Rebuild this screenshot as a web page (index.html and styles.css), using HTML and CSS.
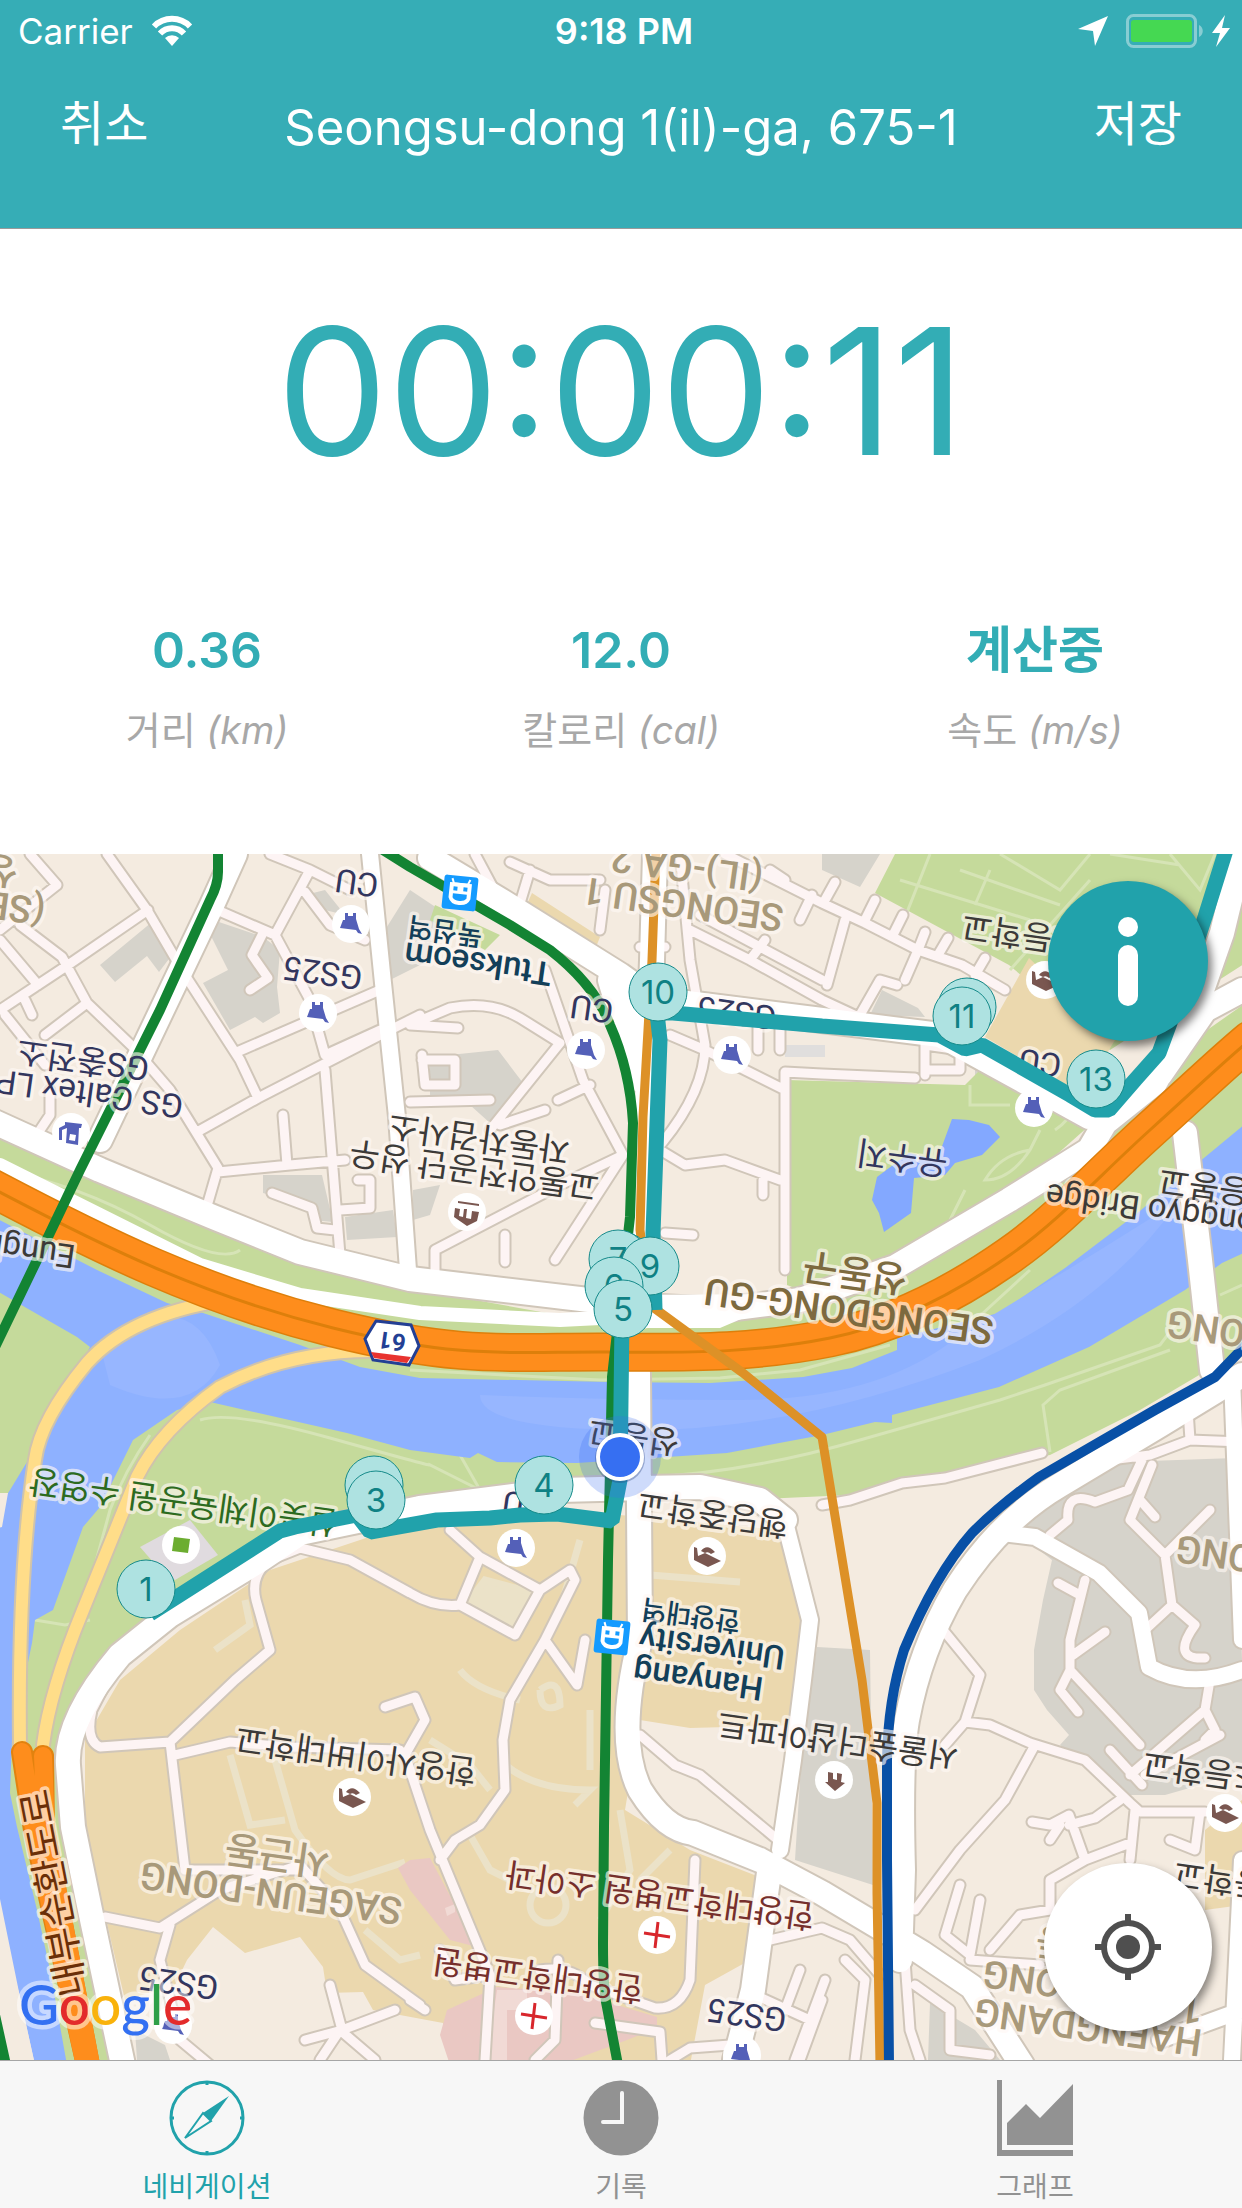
FILE: index.html
```html
<!DOCTYPE html>
<html lang="ko">
<head>
<meta charset="utf-8">
<meta name="viewport" content="width=device-width, initial-scale=1">
<title>네비게이션</title>
<link rel="stylesheet" href="styles.css">
</head>
<body>
<header class="header">
  <div class="status">
    <div class="status-side">
      <span>Carrier</span>
      <svg class="wifi" viewBox="0 0 44 32" aria-hidden="true"><path d="M22 31l-7-8a10 10 0 0 1 14 0z"/><path d="M4 11.500a25 25 0 0 1 36 0M10 18.500a16.500 16.500 0 0 1 24 0" fill="none" stroke="currentColor" stroke-width="6"/></svg>
    </div>
    <strong class="status-time">9:18 PM</strong>
    <div class="status-side status-right">
      <svg class="arrow" viewBox="0 0 30 30" aria-hidden="true"><path d="M30 0L17 30L15 15L0 13z"/></svg>
      <svg class="battery" viewBox="0 0 78 34" aria-hidden="true"><rect x="1.500" y="1.500" width="68" height="31" rx="6" fill="none" stroke="#88cdd3" stroke-width="3"/><path d="M73 11c5 2 5 10 0 12z" fill="#88cdd3"/><rect x="5" y="6" width="61" height="22" rx="3" fill="#45d852"/></svg>
      <svg class="bolt" viewBox="0 0 18 32" aria-hidden="true"><path d="M13 0L0 18h8L4 32L18 13h-8z"/></svg>
    </div>
  </div>
  <div class="navbar">
    <button class="nav-button" type="button">취소</button>
    <h1 class="nav-title">Seongsu-dong 1(il)-ga, 675-1</h1>
    <button class="nav-button" type="button">저장</button>
  </div>
</header>
<section class="summary">
  <div class="timer">00:00:11</div>
  <dl class="stats">
    <div class="stat"><dd>0.36</dd><dt>거리 <em>(km)</em></dt></div>
    <div class="stat"><dd>12.0</dd><dt>칼로리 <em>(cal)</em></dt></div>
    <div class="stat"><dd>계산중</dd><dt>속도 <em>(m/s)</em></dt></div>
  </dl>
</section>
<main class="map">
<svg class="map-canvas" viewBox="0 854 1242 1206" preserveAspectRatio="xMidYMid slice" role="img" aria-label="지도">
  <defs>
    <path id="minor" d="M0 1010L68 965L148 910M20 925L62 957L87 1003L133 1047L170 1090L218 1168L207 1206M107 854L147 910L185 975L240 1060L258 1098M30 854L57 885L0 930M197 1132L258 1098L390 1030L420 1015M237 1052L380 990M218 1172L290 1165L345 1160M283 1115L287 1165M325 1070L340 1255M217 910L275 935L310 870L270 854M275 935L310 1000M262 935L252 955L268 978L250 990M310 870L350 890M305 892L330 925L365 940M272 1193L312 1208L317 1228L335 1230M340 1210L370 1208L370 1180L358 1180M0 940L38 985M5 1015L45 1065M87 1003L45 1035M25 1000L32 1015M50 1090V1115L40 1130M318 1030L325 1055L380 1030M410 1025L450 1008Q490 1000 520 1018L560 1043M545 970L583 1080L623 1155M560 1043L490 1130M410 1025L458 1028M558 1100L590 1085M500 1125L545 1110M422 1060H455V1085H425L422 1055M410 1102L490 1100M623 1155L560 1185L435 1250V1270M623 1155L555 1260M505 1235V1262M660 1150L685 1165L725 1160L780 1180M763 1180V1195M662 1143Q705 1090 705 1045L690 960L680 854M670 1035L705 1050L785 1090V1270M785 1090V1072L822 1074L915 1078M758 1025V1050M780 1025V1050M690 930L750 960L822 1000L865 1020M750 960L765 940M700 915L822 980M725 854L822 903L865 923L918 950L962 965L1005 990M825 900L835 882M865 920L875 900M893 935L903 915M918 950L925 932M938 955L948 938M975 975L985 958M665 947H640M510 862L550 880L600 880M515 920L530 870M475 854L505 910M600 930L605 890M665 1233L693 1235M827 985L845 920M860 1015L880 980L897 985M905 980L918 950M770 870L785 880M800 920L812 895M925 1075V1045L960 1050V1070H930M300 1548L270 1560Q250 1575 256 1600L270 1650L235 1680L170 1742M300 1548L350 1560L410 1593Q435 1608 460 1605L480 1557L450 1530M480 1557L540 1590L515 1635L460 1605M540 1590L570 1570L575 1580L545 1640L577 1685L585 1640M545 1640L510 1700L503 1740L505 1790L480 1825L455 1840L440 1860M170 1742L100 1747Q85 1740 92 1710L110 1675M170 1742L185 1870L300 1870M175 1755L230 1742L290 1747L400 1750M105 1917L160 1928L220 1890L300 1865L340 1910L365 1965L420 2005M170 1925L160 1960L180 2040L210 2065M385 1707L415 1697L425 1720L405 1755L430 1830L490 1975L485 2060M330 1985L342 2030L305 2040M342 2030L395 2010M340 2030L375 2060M340 2030L320 2060M490 1975L455 1980L440 1950M410 2000L425 2010M558 1960L555 2040L535 2060M595 2023L660 2032L662 2060M695 1860L690 1980Q680 2010 655 2008L590 1985Q570 1965 540 1970M640 1735L675 1765L700 1775L778 1840M670 2060L690 2048L730 2045M755 1995L810 2020L795 2060M785 2010L800 1970M812 2015L825 1980M770 1940L822 1928L850 1940L880 1975M845 1960L865 1980L855 2060M800 2060L822 2000M935 1620L980 1675L965 1722L945 1745M965 1722L990 1725L1030 1743L1085 1760L1130 1803L1140 1812H1205M1035 1745L1005 1800L960 1850L915 1910M1032 1822L1050 1825L1069 1815L1085 1860L1130 1843M1050 1840L1060 1825M1069 1825L1095 1818L1120 1800M1085 1860L1050 1880V1910L1020 1915L990 1950M1135 1810L1130 1860M960 1885L945 1935L970 1955M980 1900L970 1955M915 1985L950 2010V2050L990 2055M905 1960L910 2030L920 2060M970 1960L1040 1965M1200 1812L1195 1850L1170 1840M1142 1460L1128 1490L1095 1502Q1065 1490 1068 1520L1050 1535M1152 1465L1130 1520L1165 1555L1172 1605L1195 1625Q1170 1660 1205 1658M1172 1605L1145 1630M1210 1510L1165 1555M1140 1500L1155 1517M1085 1580L1070 1640V1670L1140 1745M1058 1583L1080 1595M1073 1655L1105 1632M1070 1670L1060 1690L1078 1712M1110 1750L1142 1785M1130 1775L1205 1710L1210 1680M1205 1710L1215 1730L1205 1740M822 1505L850 1500L902 1483L945 1478L1042 1453M1110 1460L1150 1455L1190 1440L1242 1442M1188 1410L1190 1440M1145 1775L1220 1735"/>
    <path id="medium" d="M370 854L383 983L397 1117L408 1270M787 1530L810 1620L803 1680L793 1760L780 1850M1002 1533L1035 1537L1099 1573L1139 1613L1149 1667Q1190 1690 1242 1670M1232 1377L1242 1640M1242 1860L1232 2060M1160 2040L1242 2010"/>
    <path id="major" d="M235 854L212 905L100 1140M-10 1120L100 1170L213 1217L300 1252L410 1279L640 1306L720 1310L800 1300L895 1267L1009 1200L1089 1150L1105 1123L1155 1083L1195 1010L1222 933L1242 850M1160 1075L1205 1010L1242 990M1185 1133L1200 1260L1212 1370M430 858L500 900L620 975L655 1000M655 854L652 960L640 1300M610 980L640 1080M687 1003L822 1020L940 1035L1089 1117M1242 1375L1160 1425L1060 1485Q1000 1520 955 1590Q920 1650 907 1720Q900 1760 903 1870L900 1960M638 1373L640 1640Q615 1740 640 1790Q665 1830 693 1833L760 1860L822 1893L879 1927L922 1953L972 1987L1022 2065M420 1508L300 1533L260 1560L170 1615L120 1655Q65 1720 68 1765L73 1827L90 1910L123 2065M420 1508L560 1490L640 1488L700 1487L760 1500L785 1520M770 1865L753 1990L735 2060"/>
    <g id="shop"><circle r="19" fill="#fff"/><path d="M-6-11h3v3h5v-3h3v6L8 5l3 5-4-1-2-3-16-2L-8-4h2z" fill="#5460b8"/></g>
    <g id="school"><circle r="19" fill="#fff"/><path d="M-13-9l3 1 1 8 7-3 16 8L1 11-13 4zM-6-5q6-8 14 1l-4 2q-3-3-6-1z" fill="#7a5750"/></g>
    <g id="hospital"><circle r="19" fill="#fff"/><path d="M1-13L-2 13M-13-2L13 2" stroke="#d8262c" stroke-width="3"/></g>
    <g id="metro" transform="rotate(6)"><rect x="-17" y="-17" width="34" height="34" rx="3" fill="#149bff"/><path d="M-9-14l2 5h14l2-5" fill="none" stroke="#fff" stroke-width="2"/><path d="M-10-9h20v14q-2 6-10 6t-10-6z" fill="#fff" stroke="#fff" stroke-width="2"/><path d="M-7 1H7v4q-2 3-7 3t-7-3zM-7-6h4v4h-4zM3-6h4v4H3z" fill="#149bff"/></g>
    <path id="expressway" d="M-10 1187C100 1245 200 1295 333 1328S520 1351 610 1352S760 1352 830 1338S960 1290 1010 1255S1100 1175 1150 1130S1220 1065 1250 1040"/>
    <path id="ramps" d="M225 1300Q130 1315 87 1363Q40 1420 35 1460Q18 1570 20 1745M400 1352Q300 1345 220 1387Q160 1430 137 1477L83 1610Q50 1690 43 1745"/>
  </defs>
  <rect x="-400" y="454" width="2100" height="2000" fill="#f4ebe0"/>
  <g fill="#d6d3cb">
    <path d="M100 965L152 922L172 955L159 972L147 956L115 982zM213 920L263 937L280 950L277 987L280 1013L263 1023L255 1017L230 1030L203 983L228 970L208 930zM263 1175H322L333 1222L312 1220L308 1205L263 1193zM345 1217L393 1210L397 1237L347 1240zM385 930L410 890L440 910L430 960L390 980zM430 1057L498 1050L523 1083L490 1123L470 1105L430 1097zM822 854H880L860 887L822 870zM882 990L918 1008L925 1017L870 1015zM313 893L325 890L345 915L325 910zM413 1190L440 1185L430 1215L413 1220zM975 1055L1000 1070L975 1078z"/>
    <path d="M1009 1527L1080 1480L1120 1462L1235 1458L1242 1660V1770L1200 1785L1165 1795L1120 1795L1080 1760L1060 1745L1069 1735L1047 1710L1034 1690V1650L1043 1600L1052 1560zM817 1647L870 1650L873 1885L795 1860L800 1780L808 1700zM930 2003L975 2030L1000 2060H928zM135 2030L165 2045L170 2060H137z"/>
  </g>
  <path d="M785 1045h40v12h-40z" fill="#e0dedd"/>
  <g fill="#c5da9b">
    <path d="M-10 1120L200 1215L420 1290L640 1330L900 1262L1090 1145L1200 1035L1250 1000V1345L1140 1410L1050 1455L850 1495L740 1500L540 1485L410 1510L300 1530L170 1610L110 1650L75 1700L60 1760L65 1850L125 2065H50L-10 1800z"/>
    <path d="M787 1080L965 1085L990 1060L1075 1105L1090 1125L1000 1205L890 1265L800 1290L787 1285zM895 854H1250V960L1110 1050L1009 965L875 893zM435 905L500 935L485 950L430 920zM628 1010L640 1015L636 1030z"/>
  </g>
  <g fill="none" stroke="#d6e4b6" stroke-width="3"><path d="M900 880L1030 920M930 854L900 930M960 870L1060 905M1000 854L1060 890L1090 854M1090 880L1010 970M990 870L975 905M1170 854L1200 890L1215 854M1110 854L1180 865M970 1085V1105H1010M1040 1130L1030 1150Q1000 1155 985 1180Q1010 1180 1030 1150M1055 1130Q1070 1120 1075 1105M965 1190L950 1220M0 1170Q80 1185 150 1225T240 1250M200 1420Q230 1410 330 1438T430 1465L480 1490L460 1455M650 1477Q750 1472 860 1440L1000 1400L1045 1385L1160 1345L1175 1325M1170 1350L1060 1390L1043 1405L1050 1452M90 1620L65 1625L35 1620M150 1435Q125 1470 110 1510L80 1620M410 1370L600 1380L720 1378L800 1370L890 1345M970 1325L1030 1270M1220 1295L1242 1285"/></g>
  <path d="M952 1119L969 1120L989 1125L1000 1137L982 1155L955 1163L945 1175L914 1178L911 1213L884 1232L879 1213L872 1200L877 1177L909 1153L937 1160z" fill="#83a8ff"/>
  <path d="M-10 1215L97 1270L167 1303L200 1312L300 1345L360 1367L420 1378L610 1382L710 1383L803 1377L852 1368L897 1350V1338L999 1313L1065 1268L1135 1215L1250 1120V1250L1222 1263L1185 1290L1089 1347L999 1387L892 1415V1423L875 1422L822 1435L727 1453L577 1463L497 1462L478 1453L470 1458L410 1450L347 1433L210 1402L177 1410L133 1440L100 1507L83 1527L53 1610L35 1620L32 1643L12 1740L10 1793L17 1827L37 1910L50 1970L67 2065H35L20 1997L-10 1850V1520L10 1490L30 1457L90 1347L77 1337L-10 1287z" fill="#8eb1ff"/>
  <path d="M100 1345Q190 1280 220 1365Q190 1420 110 1385zM480 1395Q600 1400 740 1400T960 1335L1100 1250L1180 1200Q1110 1300 980 1360Q800 1430 640 1430T480 1395z" fill="#97b6ff"/>
  <path d="M-10 1493L8 1493L2 1527L-10 1530zM-10 1880L20 1997L35 2065H-10z" fill="#f4ebe0"/>
  <path d="M85 1740L120 1680L180 1630L270 1570L420 1520L620 1515L780 1530L812 1620L798 1725L690 1728L640 1720L625 1810L690 1850L780 1885L750 1960L705 1985L690 2065H450L443 2023L373 2010L363 1992L327 1993L323 1967L300 1937L245 1953L213 1927L187 1960L175 1985L125 2000L85 1830zM1029 958L1115 1040L1082 1095L985 1037zM532 893L600 937L592 957L523 913zM1205 1830L1242 1800V1905L1205 1910z" fill="#ebd8ae"/>
  <g fill="none" stroke="#ebe2c8" stroke-width="7"><path d="M230 1755L250 1825L285 1820M275 1760L295 1830Q330 1880 350 1880L405 1862M460 1670Q475 1690 520 1700M540 1690q20-15 20 15q-20 10-20-15M590 1710V1770M500 1760Q530 1790 590 1790L575 1805M620 1810L630 1870L600 1920M670 1850L640 1880M470 1835L490 1870L530 1890M650 1575L740 1582M560 1610L580 1540M215 1650L250 1625L245 1600M365 1930L400 1960L420 1955M430 1740L470 1765L490 1790"/><path d="M466 1605L485 1580L530 1592L515 1625z" fill="#ebe2c8"/><circle cx="548" cy="1905" r="18"/></g>
  <path d="M398 1868L410 1860L430 1858L477 1947L450 1940L410 1890zM447 2010L497 1987L577 1993L657 2017V2028L627 2040L560 2065H450L440 2035z" fill="#eac8c3"/>
  <path d="M497 1990h30v20h-20v50h-20zM445 1908l10-4v8l-8 4z" fill="#f1dad5"/>
  <path d="M140 1547L190 1520L218 1555L175 1580L160 1570z" fill="#e0dbdf"/>

  <use href="#minor" class="road minor-casing"/>
  <use href="#medium" class="road medium-casing"/>
  <use href="#major" class="road major-casing"/>
  <use href="#minor" class="road minor-fill"/>
  <use href="#medium" class="road medium-fill"/>
  <use href="#major" class="road major-fill"/>
  <path d="M0 1165L100 1215L200 1265L300 1295L420 1313L560 1320L640 1316" class="road" stroke="#fff" stroke-width="14"/>
  <path d="M610 990L655 1000L640 1090zM590 1295L800 1294L720 1328L600 1328z" fill="#fff"/>
  <g class="road">
    <use href="#ramps" stroke="#cfc3ac" stroke-width="16"/>
    <use href="#ramps" stroke="#ffdd89" stroke-width="12"/>
    <path d="M22 1752L34 1830L88 2070M43 1756L44 1830L90 2070" stroke="#e2820f" stroke-width="22"/>
    <path d="M22 1752L34 1830L86 2070M43 1756L46 1830L92 2070" stroke="#fe8d1c" stroke-width="18"/>
    <use href="#expressway" stroke="#dd7f0b" stroke-width="39"/>
    <use href="#expressway" stroke="#fe8d1c" stroke-width="36"/>
    <use href="#expressway" stroke="#dd7f0b" stroke-width="3"/>
    <path d="M656 850L652 960L643 1117L640 1230L650 1305L743 1373L822 1437L862 1680L877 1803V1893L880 2065" stroke="#dd9127" stroke-width="9"/>
    <path d="M1245 1346L1215 1377L1155 1410L1089 1448L1039 1477Q1000 1505 972 1533Q935 1575 904 1650Q888 1700 887 1760V1860L889 2065" stroke="#0850a6" stroke-width="10"/>
    <path d="M218 850V872Q218 885 210 900L160 1010L80 1170L37 1260L-5 1347M383 850L410 867L510 925L550 950Q595 985 610 1025Q630 1070 633 1123L630 1217L612 1377L608 1560L604 1827L603 1943Q603 1990 607 2007L618 2065M-5 2015L6 2065" stroke="#138433" stroke-width="10"/>
  </g>
  <use href="#shop" x="351" y="924"/><use href="#shop" x="318" y="1013"/><use href="#shop" x="586" y="1050"/><use href="#shop" x="732" y="1055"/><use href="#shop" x="1034" y="1108"/><use href="#shop" x="516" y="1548"/><use href="#shop" x="742" y="2055"/><use href="#shop" x="173" y="2025"/>
  <use href="#school" x="1045" y="980"/><use href="#school" x="707" y="1556"/><use href="#school" x="352" y="1797"/><use href="#school" x="1225" y="1813"/>
  <use href="#hospital" x="657" y="1935"/><use href="#hospital" x="534" y="2016"/>
  <use href="#metro" x="460" y="893"/><use href="#metro" x="612" y="1637"/>
  <g transform="translate(71 1132)"><circle r="19" fill="#fff"/><path d="M-6-10l17 2-1 4h-2l-1 17-12-2 1-15-5 2v10h-3V-4l6-3zM-1 2l-1 6 6 1 1-6z" fill="#5460b8" fill-rule="evenodd"/></g>
  <g transform="translate(467 1212)"><circle r="19" fill="#fff"/><path d="M-9-11l21 3v2l-21-3zM-12-4l5 1-1 7 4 1 1-8h3l-1 9 5 1 1-8 7 1-2 9L0 14-13 5z" fill="#7a5750"/></g>
  <g transform="translate(834 1780)"><circle r="19" fill="#fff"/><path d="M-6-8l5 1v6l4 1V-7l5 1-1 8 4 1-10 8-10-9h3z" fill="#7a5750"/></g>
  <g transform="translate(181 1545)"><circle r="19" fill="#fff"/><path d="M-7-8L9-6 7 8-9 6z" fill="#6cad30"/></g>
  <g transform="translate(392 1343)"><path d="M-16-22L19-18L27 3L17 22L-19 17L-27-4z" fill="#fff" stroke="#233f94" stroke-width="3"/><path d="M-21 9L19 14L15 20L-18 15z" fill="#e8332f"/></g>

  <g class="labels">
    <text transform="translate(392 1341) rotate(188)" class="shield">61</text>
    <g class="poi">
      <text transform="translate(357 883) rotate(188)">CU</text>
      <text transform="translate(323 973) rotate(188)">GS25</text>
      <text transform="translate(83 1060) rotate(188)">GS충전소</text>
      <text transform="translate(183 1107) rotate(188)" class="start">GS Caltex LPG</text>
      <text transform="translate(592 1009) rotate(188)">CU</text>
      <text transform="translate(737 1013) rotate(188)">GS25</text>
      <text transform="translate(1040 1063) rotate(188)">CU</text>
      <text transform="translate(902 1158) rotate(188)">유수지</text>
      <text transform="translate(524 1505) rotate(188)">CU</text>
      <text transform="translate(747 2015) rotate(188)">GS25</text>
      <text transform="translate(179 1983) rotate(188)">GS25</text>
    </g>
    <g class="place">
      <text transform="translate(479 1138) rotate(188)">자동차검사소</text>
      <text transform="translate(474 1170) rotate(188)">교통안전공단 성우</text>
      <text transform="translate(75 1257) rotate(188)" class="start">Eungbong</text>
      <text transform="translate(962 926) rotate(188)" class="end">초등학교</text>
      <text transform="translate(1046 1195) rotate(188)" class="end">Eungbonggyo Bridge</text>
      <text transform="translate(1159 1180) rotate(188)" class="end">응봉교</text>
      <text transform="translate(634 1437) rotate(188)">성동교</text>
      <text transform="translate(713 1514) rotate(188)">행당중학교</text>
      <text transform="translate(838 1740) rotate(188)">서울숲더샵아파트</text>
      <text transform="translate(356 1755) rotate(188)">한양사이버대학교</text>
      <text transform="translate(1143 1763) rotate(188)" class="end">초등학교</text>
      <text transform="translate(1174 1873) rotate(188)" class="end">초등학교</text>
    </g>
    <g class="station">
      <text transform="translate(445 931) rotate(188)" class="small">뚝섬역</text>
      <text transform="translate(478 964) rotate(188)">Ttukseom</text>
      <text transform="translate(691 1615) rotate(188)" class="small">한양대역</text>
      <text transform="translate(712 1648) rotate(188)">University</text>
      <text transform="translate(698 1680) rotate(188)">Hanyang</text>
    </g>
    <g class="area">
      <text transform="translate(18 873) rotate(188)" class="start">성수동</text>
      <text transform="translate(45 912) rotate(188)" class="start">(SEONGSU)</text>
      <text transform="translate(683 904) rotate(188)">SEONGSU 1</text>
      <text transform="translate(687 868) rotate(188)">(IL)-GA 2</text>
      <text transform="translate(1167 1323) rotate(188)" class="end">SEONG</text>
      <text transform="translate(1176 1548) rotate(188)" class="end">DONG</text>
      <text transform="translate(277 1855) rotate(188)">사근동</text>
      <text transform="translate(271 1893) rotate(188)">SAGEUN-DONG</text>
      <text transform="translate(1036 1940) rotate(188)" class="end">행당동</text>
      <text transform="translate(983 1973) rotate(188)" class="end">DONG</text>
      <text transform="translate(1192 2010) rotate(188)">1</text>
      <text transform="translate(1088 2027) rotate(188)">HAENGDANG</text>
    </g>
    <g class="district">
      <text transform="translate(855 1273) rotate(188)">성동구</text>
      <text transform="translate(849 1311) rotate(188)">SEONGDONG-GU</text>
    </g>
    <g class="hospital">
      <text transform="translate(660 1895) rotate(188)">한양대학교병원 소아과</text>
      <text transform="translate(538 1975) rotate(188)">한양대학교병원</text>
    </g>
    <text transform="translate(184 1502) rotate(188)" class="park">살곶이체육공원 수영장</text>
    <text transform="translate(54 1893) rotate(259)" class="highway">내부순환도로</text>
  </g>

  <g fill="none" stroke="#21a2ab" stroke-width="15">
    <path d="M150 1614L280 1531L295 1527L357 1515L370 1532L437 1520L490 1518L520 1515L557 1514L612 1521L620 1480L622 1320" stroke-linejoin="bevel"/>
    <path d="M655 1310L653 1233L660 1040L657 1013L673 1013L822 1026L939 1035L965 1049L982 1045L1070 1095L1095 1110H1109L1135 1080L1159 1053L1170 1023L1205 917L1226 850" stroke-linejoin="bevel"/>
  </g>
  <circle cx="620" cy="1457" r="41" fill="#3c6ef0" fill-opacity=".25"/>
  <circle cx="620" cy="1458" r="25" fill="#28427a" fill-opacity=".35"/>
  <circle cx="620" cy="1457" r="24" fill="#fff"/><circle cx="620" cy="1457" r="20" fill="#366ff2"/>
  <g class="marker">
    <circle cx="967" cy="1007" r="29"/>
    <circle cx="962" cy="1016" r="29"/><text x="962" y="1016">11</text>
    <circle cx="1096" cy="1079" r="29"/><text x="1096" y="1079">13</text>
    <circle cx="658" cy="992" r="29"/><text x="658" y="992">10</text>
    <circle cx="622" cy="1261" r="29"/>
    <circle cx="618" cy="1259" r="29"/><text x="618" y="1259">7</text>
    <circle cx="650" cy="1266" r="29"/><text x="650" y="1266">9</text>
    <circle cx="614" cy="1286" r="29"/><text x="614" y="1286">6</text>
    <circle cx="623" cy="1309" r="29"/><text x="623" y="1309">5</text>
    <circle cx="544" cy="1485" r="29"/><text x="544" y="1485">4</text>
    <circle cx="374" cy="1485" r="29"/>
    <circle cx="376" cy="1500" r="29"/><text x="376" y="1500">3</text>
    <circle cx="146" cy="1589" r="29"/><text x="146" y="1589">1</text>
  </g>
  <text class="google" x="19" y="2025"><tspan fill="#3370f2">G</tspan><tspan fill="#e32b2b">o</tspan><tspan fill="#f9b20b">o</tspan><tspan fill="#3370f2">g</tspan><tspan fill="#2e9f48">l</tspan><tspan fill="#e32b2b">e</tspan></text>
</svg>
<button class="fab fab-info" type="button" aria-label="정보"><svg viewBox="0 0 160 160" aria-hidden="true"><circle cx="80" cy="46" r="10" fill="#fff"/><rect x="70" y="64" width="20" height="61" rx="10" fill="#fff"/></svg></button>
<button class="fab fab-locate" type="button" aria-label="현재 위치"><svg viewBox="0 0 168 168" aria-hidden="true"><circle cx="84" cy="84" r="12" fill="#4f4f4f"/><circle cx="84" cy="84" r="24" fill="none" stroke="#4f4f4f" stroke-width="6"/><path d="M84 51v9M84 108v9M51 84h9M108 84h9" stroke="#4f4f4f" stroke-width="6"/></svg></button>
</main>
<nav class="tabs">
  <a class="tab tab-active" href="#navigation">
    <svg viewBox="0 0 76 76" aria-hidden="true"><circle cx="38" cy="38" r="36" fill="none" stroke="currentColor" stroke-width="3"/><path d="M38 1v4M38 71v4M1 38h4M71 38h4" stroke="currentColor" stroke-width="3"/><path d="M60 16L34 33L42 41z" fill="currentColor"/><path d="M34 33L16 58L42 41z" fill="none" stroke="currentColor" stroke-width="2"/></svg>
    <span>네비게이션</span>
  </a>
  <a class="tab" href="#records">
    <svg viewBox="0 0 76 76" aria-hidden="true"><circle cx="38" cy="38" r="37.500" fill="currentColor"/><path d="M39 13v29H20" fill="none" stroke="#f7f7f7" stroke-width="4" stroke-linecap="round"/></svg>
    <span>기록</span>
  </a>
  <a class="tab" href="#graph">
    <svg viewBox="0 0 76 76" aria-hidden="true"><path d="M0 0h5v70h71v6H0z" fill="currentColor"/><path d="M10 65V43L29 24L43 38L76 4V65z" fill="currentColor"/></svg>
    <span>그래프</span>
  </a>
</nav>
</body>
</html>
```
FILE: styles.css
```css
* { box-sizing: border-box; }
body {
  margin: 0;
  min-height: 100vh;
  display: flex;
  flex-direction: column;
  background: #fff;
  font-family: Inter, "Noto Sans CJK KR", sans-serif;
}
button { border: 0; padding: 0; font: inherit; color: inherit; background: none; cursor: pointer; }

.header { height: 229px; background: #36adb6; color: #fff; border-bottom: 1px solid #9a9a9a; }
.status { display: flex; align-items: center; height: 62px; padding: 0 12px 0 18px; font-size: 35px; line-height: 62px; }
.status-side { flex: 1; display: flex; align-items: center; gap: 17px; }
.status-right { justify-content: flex-end; gap: 14px; }
.status-time { font-size: 36px; font-weight: 600; }
.wifi { width: 44px; height: 32px; fill: currentColor; }
.arrow { width: 30px; height: 30px; fill: currentColor; margin-right: 4px; }
.battery { width: 78px; height: 34px; }
.bolt { width: 18px; height: 32px; fill: currentColor; margin-left: -6px; }
.navbar { display: flex; align-items: center; justify-content: space-between; height: 132px; padding: 0 60px; }
.nav-button { font-size: 48px; line-height: 60px; padding-bottom: 8px; font-weight: 400; }
.nav-title { margin: 0; font-size: 49px; line-height: 60px; font-weight: 400; }

.summary { background: #fff; }
.timer { padding-top: 52px; height: 344px; text-align: center; font-size: 176px; line-height: 220px; font-weight: 400; color: #33adb5; }
.stats { margin: 0; display: grid; grid-template-columns: repeat(3, 1fr); height: 281px; padding-top: 43px; }
.stat { display: flex; flex-direction: column; align-items: center; gap: 16px; }
.stat dd { margin: 0; font-size: 50px; line-height: 68px; font-weight: 600; color: #33adb5; }
.stat dt { font-size: 38px; line-height: 60px; font-weight: 400; color: #a8a8a8; }

.map { position: relative; flex: 1; min-height: 600px; overflow: hidden; background: #f4ebe0; }
.map-canvas { position: absolute; inset: 0; width: 100%; height: 100%; }
.road { fill: none; stroke-linecap: round; stroke-linejoin: round; }
.minor-casing { stroke: #d0c6b9; stroke-width: 13px; }
.minor-fill { stroke: #fdf4f4; stroke-width: 9px; }
.medium-casing { stroke: #d0c6b9; stroke-width: 20px; }
.medium-fill { stroke: #fff; stroke-width: 16px; }
.major-casing { stroke: #d0c6b9; stroke-width: 28px; }
.major-fill { stroke: #fff; stroke-width: 24px; }
.labels text {
  font-family: Roboto, "Noto Sans CJK KR", sans-serif;
  font-size: 33px;
  text-anchor: middle;
  dominant-baseline: central;
  paint-order: stroke;
  stroke: rgba(255, 248, 244, 0.65);
  stroke-width: 7px;
  stroke-linejoin: round;
}
.labels .start { text-anchor: start; }
.labels .end { text-anchor: end; }
.labels .shield { font-size: 24px; font-weight: 700; fill: #233f94; stroke: none; }
.labels .small { font-size: 27px; }
.poi { fill: #33365e; }
.place { fill: #3c3a38; }
.station { fill: #133f59; font-weight: 500; }
.labels .area text { fill: #a8997a; font-size: 38px; font-weight: 500; }
.labels .district text { fill: #7d6a3f; font-size: 38px; font-weight: 500; }
.hospital { fill: #762f2c; }
.park { fill: #2d6b1f; }
.labels .highway { fill: #6b2f08; font-size: 38px; }
.marker circle { fill: #aee2e1; stroke: #158a8a; stroke-width: 1px; }
.marker text { font-size: 33px; fill: #0f8184; text-anchor: middle; dominant-baseline: central; }
.google { font-family: Lato, sans-serif; font-size: 55px; font-weight: 500; paint-order: stroke; stroke: rgba(255, 255, 255, 0.5); stroke-width: 9px; stroke-linejoin: round; }

.fab { position: absolute; border-radius: 50%; }
.fab svg { display: block; width: 100%; height: 100%; }
.fab-info { top: 27px; right: 34px; width: 160px; height: 160px; background: #21a2ab; box-shadow: 4px 5px 8px rgba(0, 0, 0, 0.5); }
.fab-locate { right: 30px; bottom: 29px; width: 168px; height: 168px; background: #fff; box-shadow: 3px 5px 9px rgba(0, 0, 0, 0.45); }

.tabs { display: grid; grid-template-columns: repeat(3, 1fr); height: 148px; border-top: 1px solid #a5a5a5; background: #f7f7f7; }
.tab { display: flex; flex-direction: column; align-items: center; gap: 11px; padding-top: 19px; color: #929292; text-decoration: none; font-size: 28px; line-height: 40px; }
.tab svg { width: 76px; height: 76px; }
.tab-active { color: #21a2ab; }
```
